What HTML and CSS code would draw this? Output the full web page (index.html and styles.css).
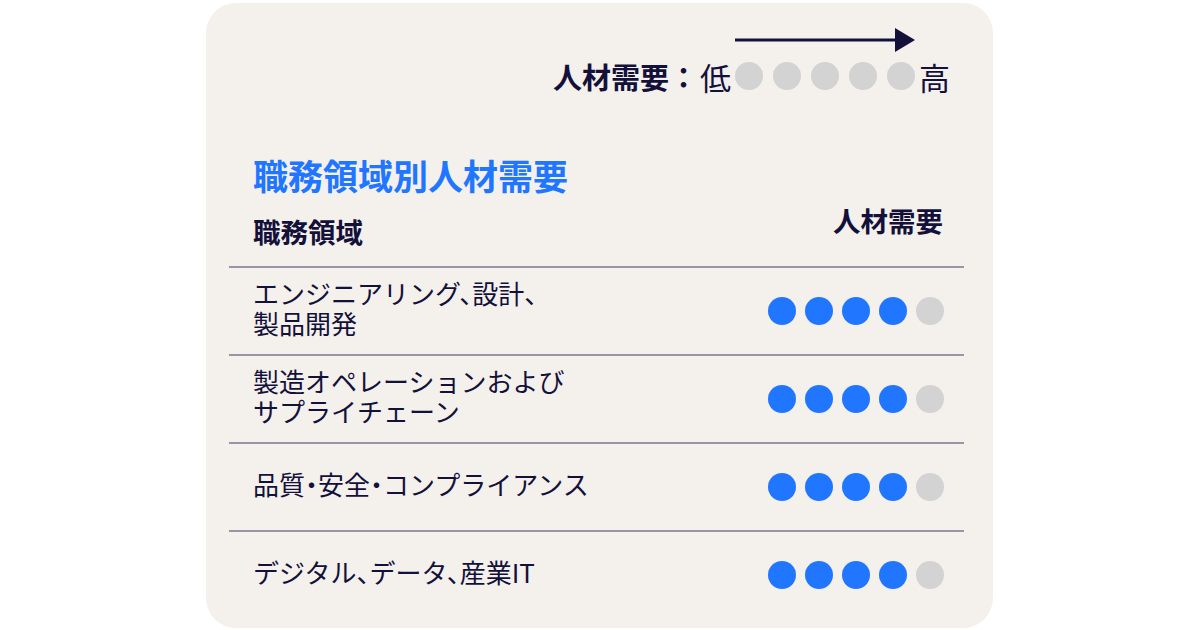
FILE: index.html
```html
<!DOCTYPE html>
<html lang="ja">
<head>
  <meta charset="UTF-8">
  <meta name="viewport" content="width=device-width, initial-scale=1.0">
  <title>職務領域別人材需要</title>
  <link rel="stylesheet" href="styles.css">
</head>
<body>

  <div class="card">

    <div class="legend">
      <div class="legend-arrow">
        <svg width="180" height="26" viewBox="0 0 180 26">
          <line x1="0" y1="13" x2="164" y2="13" stroke="#13103a" stroke-width="3"></line>
          <polygon points="160,1 180,13 160,25" fill="#13103a"></polygon>
        </svg>
      </div>
      <div class="legend-row">
        <span class="legend-label">人材需要：</span>
        <span class="legend-end">低</span>
        <span class="dots">
          <span class="dot"></span><span class="dot"></span><span class="dot"></span><span class="dot"></span><span class="dot"></span>
        </span>
        <span class="legend-end">高</span>
      </div>
    </div>

    <h1 class="title">職務領域別人材需要</h1>

    <div class="table">
      <div class="table-head">
        <span>職務領域</span>
        <span class="head-right">人材需要</span>
      </div>

      <div class="row">
        <span class="row-name">エンジニアリング、設計、<br>製品開発</span>
        <span class="dots">
          <span class="dot on"></span><span class="dot on"></span><span class="dot on"></span><span class="dot on"></span><span class="dot"></span>
        </span>
      </div>

      <div class="row">
        <span class="row-name">製造オペレーションおよび<br>サプライチェーン</span>
        <span class="dots">
          <span class="dot on"></span><span class="dot on"></span><span class="dot on"></span><span class="dot on"></span><span class="dot"></span>
        </span>
      </div>

      <div class="row">
        <span class="row-name">品質・安全・コンプライアンス</span>
        <span class="dots">
          <span class="dot on"></span><span class="dot on"></span><span class="dot on"></span><span class="dot on"></span><span class="dot"></span>
        </span>
      </div>

      <div class="row">
        <span class="row-name">デジタル、データ、産業IT</span>
        <span class="dots">
          <span class="dot on"></span><span class="dot on"></span><span class="dot on"></span><span class="dot on"></span><span class="dot"></span>
        </span>
      </div>
    </div>

  </div>

</body>
</html>
```

FILE: styles.css
```css
body {
  margin: 0;
  padding: 0;
  background-color: #ffffff;
  font-family: "Noto Sans CJK JP", "Noto Sans", sans-serif;
  color: #13103a;
}

.card {
  box-sizing: border-box;
  width: 787px;
  height: 625px;
  margin: 3px 0 0 206px;
  padding: 24px 29px 0 23px;
  background-color: #f4f0ec;
  border-radius: 30px;
}

/* legend */
.legend {
  display: flex;
  flex-direction: column;
  align-items: flex-end;
  padding-right: 14px;
}

.legend-arrow {
  margin-right: 35px;
  height: 26px;
}

.legend-arrow svg {
  display: block;
}

.legend-row {
  display: flex;
  align-items: center;
  gap: 4px;
  margin-top: 6px;
  height: 34px;
}

.legend-label {
  font-size: 29px;
  font-weight: bold;
  margin-right: -2px;
}

.legend-end {
  font-size: 31px;
}

.legend-row .dots {
  gap: 10px;
}

/* title */
.title {
  margin: 60px 0 0;
  padding-left: 24px;
  font-size: 35px;
  line-height: 44px;
  font-weight: bold;
  color: #2176ff;
}

/* table */
.table-head {
  display: flex;
  justify-content: space-between;
  align-items: flex-end;
  padding: 6px 21px 18px 24px;
  font-size: 27.5px;
  line-height: 34px;
  font-weight: bold;
  font-feature-settings: "palt";
}

.head-right {
  margin-bottom: 11px;
}

.row {
  display: flex;
  justify-content: space-between;
  align-items: center;
  min-height: 86px;
  padding: 0 20px 0 24px;
  border-top: 2px solid #9995a6;
}

.row-name {
  font-size: 26px;
  line-height: 30px;
  margin-top: -6px;
  font-feature-settings: "halt";
}

.dots {
  display: flex;
  gap: 9px;
}

.dot {
  width: 28px;
  height: 28px;
  border-radius: 50%;
  background-color: #d3d3d3;
}

.dot.on {
  background-color: #2176ff;
}
```
